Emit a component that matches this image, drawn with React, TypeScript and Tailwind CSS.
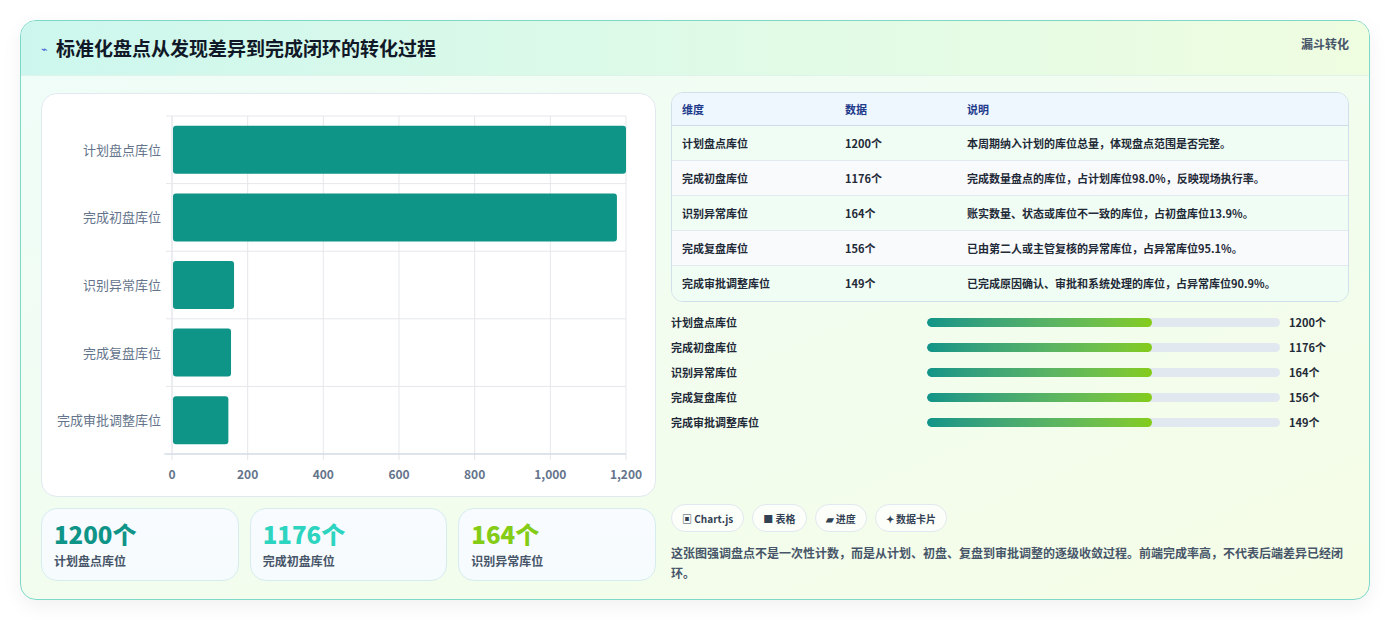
import React from "react";

const rows = [
  { name: "计划盘点库位", v: 1200, d: "本周期纳入计划的库位总量，体现盘点范围是否完整。" },
  { name: "完成初盘库位", v: 1176, d: "完成数量盘点的库位，占计划库位98.0%，反映现场执行率。" },
  { name: "识别异常库位", v: 164, d: "账实数量、状态或库位不一致的库位，占初盘库位13.9%。" },
  { name: "完成复盘库位", v: 156, d: "已由第二人或主管复核的异常库位，占异常库位95.1%。" },
  { name: "完成审批调整库位", v: 149, d: "已完成原因确认、审批和系统处理的库位，占异常库位90.9%。" },
];

function Chart() {
  const x0 = 130, x1 = 584, y0 = 22, y1 = 360;
  const sx = (v: number) => x0 + ((x1 - x0) * v) / 1200;
  const band = (y1 - y0) / 5;
  return (
    <svg width="615" height="403" className="block">
      {[0, 200, 400, 600, 800, 1000, 1200].map((t) => (
        <g key={t}>
          <line x1={sx(t)} x2={sx(t)} y1={y0} y2={y1 + 6} stroke="#e5e7eb" />
          <text x={sx(t)} y={385} textAnchor="middle" fontSize="12" fill="#64748b" fontWeight="600">{t.toLocaleString("en-US")}</text>
        </g>
      ))}
      {[0, 1, 2, 3, 4, 5].map((i) => (
        <line key={i} x1={x0 - 6} x2={x1} y1={y0 + band * i} y2={y0 + band * i} stroke="#e5e7eb" />
      ))}
      <line x1={x0 - 8} x2={x1} y1={y1} y2={y1} stroke="#cbd5e1" />
      <line x1={x0} x2={x0} y1={y0} y2={y1} stroke="#e5e7eb" />
      {rows.map((r, i) => {
        const cy = y0 + band * i + band / 2;
        return (
          <g key={r.name}>
            <rect x={x0 + 1} y={cy - 24} width={sx(r.v) - x0 - 1} height={48} rx={3} fill="#0f9488" />
            <text x={x0 - 11} y={cy + 5} textAnchor="end" fontSize="13" fill="#64748b">{r.name}</text>
          </g>
        );
      })}
    </svg>
  );
}

export default function App() {
  return (
    <div className="w-[1390px] h-[621px] bg-white p-5 pb-0" style={{ fontFamily: '"Noto Sans CJK SC", "Noto Sans", sans-serif' }}>
      <div className="h-[580px] rounded-2xl border border-[#7dd8c8] overflow-hidden bg-gradient-to-br from-[#effdf9] to-[#f5fde6] shadow-[0_6px_20px_rgba(0,0,0,0.06)]">
        <div className="h-[55px] bg-gradient-to-r from-[#cdf7ee] to-[#effde0] border-b border-[#dff3ea] flex items-start justify-between px-5">
          <div className="flex items-center gap-2 mt-[13px]">
            <span className="text-[11px] text-[#3b5bdb]">⌁</span>
            <span className="text-[19px] font-bold text-[#111827]">标准化盘点从发现差异到完成闭环的转化过程</span>
          </div>
          <span className="text-[12px] font-bold text-[#475569] mt-[14px]">漏斗转化</span>
        </div>
        <div className="flex gap-[15px] px-5 pt-[17px]">
          <div className="w-[615px] flex flex-col gap-[11px]">
            <div className="h-[404px] bg-white rounded-2xl border border-[#e2e8f0]"><Chart /></div>
            <div className="flex gap-[11px]">
              {[["1200个", "text-[#0f9488]", "计划盘点库位"], ["1176个", "text-[#2dd4bf]", "完成初盘库位"], ["164个", "text-[#84cc16]", "识别异常库位"]].map(([n, c, l]) => (
                <div key={l} className="flex-1 h-[73px] rounded-2xl border border-[#d6ecef] bg-gradient-to-b from-[#f8fbff] to-[#f6fbfd] px-3 pt-[10px]">
                  <div className={`text-[24px] leading-[30px] font-extrabold ${c}`}>{n}</div>
                  <div className="text-[12px] font-semibold text-[#475569] mt-[3px]">{l}</div>
                </div>
              ))}
            </div>
          </div>
          <div className="flex-1 flex flex-col">
            <div className="rounded-xl border border-[#cfe0ea] overflow-hidden -mt-[1px]">
              <div className="h-[33px] bg-[#eef6fe] border-b border-[#cfdcea] flex items-center px-[10px] text-[11px] font-bold text-[#1e3a8a]">
                <span className="w-[163px]">维度</span><span className="w-[122px]">数据</span><span>说明</span>
              </div>
              {rows.map((r, i) => (
                <div key={r.name} className={`h-[35px] flex items-center px-[10px] text-[11px] font-semibold text-[#1f2937] ${i < 4 ? "border-b border-[#e2eaf0]" : ""} ${i % 2 ? "bg-[#f8fafc]" : "bg-[#f0fdf4]"}`}>
                  <span className="w-[163px]">{r.name}</span><span className="w-[122px]">{r.v}个</span><span>{r.d}</span>
                </div>
              ))}
            </div>
            <div className="flex flex-col gap-[9px] mt-[12px]">
              {rows.map((r) => (
                <div key={r.name} className="h-[16px] flex items-center text-[11px] font-semibold text-[#1f2937]">
                  <span className="w-[256px]">{r.name}</span>
                  <div className="w-[353px] h-[9px] rounded-full bg-[#e2e8f0] overflow-hidden">
                    <div className="w-[225px] h-full rounded-full bg-gradient-to-r from-[#0f9488] to-[#84cc16]" />
                  </div>
                  <span className="ml-[9px]">{r.v}个</span>
                </div>
              ))}
            </div>
            <div className="flex gap-[8px] mt-[74px]">
              {["▣ Chart.js", "■ 表格", "▰ 进度", "✦ 数据卡片"].map((t) => (
                <span key={t} className="h-[28px] px-[10px] rounded-full bg-white/70 border border-[#e2e8f0] flex items-center text-[10px] font-bold text-[#334155]">{t}</span>
              ))}
            </div>
            <p className="mt-[11px] text-[12px] leading-[20px] font-semibold text-[#475569]">这张图强调盘点不是一次性计数，而是从计划、初盘、复盘到审批调整的逐级收敛过程。前端完成率高，不代表后端差异已经闭环。</p>
          </div>
        </div>
      </div>
    </div>
  );
}
